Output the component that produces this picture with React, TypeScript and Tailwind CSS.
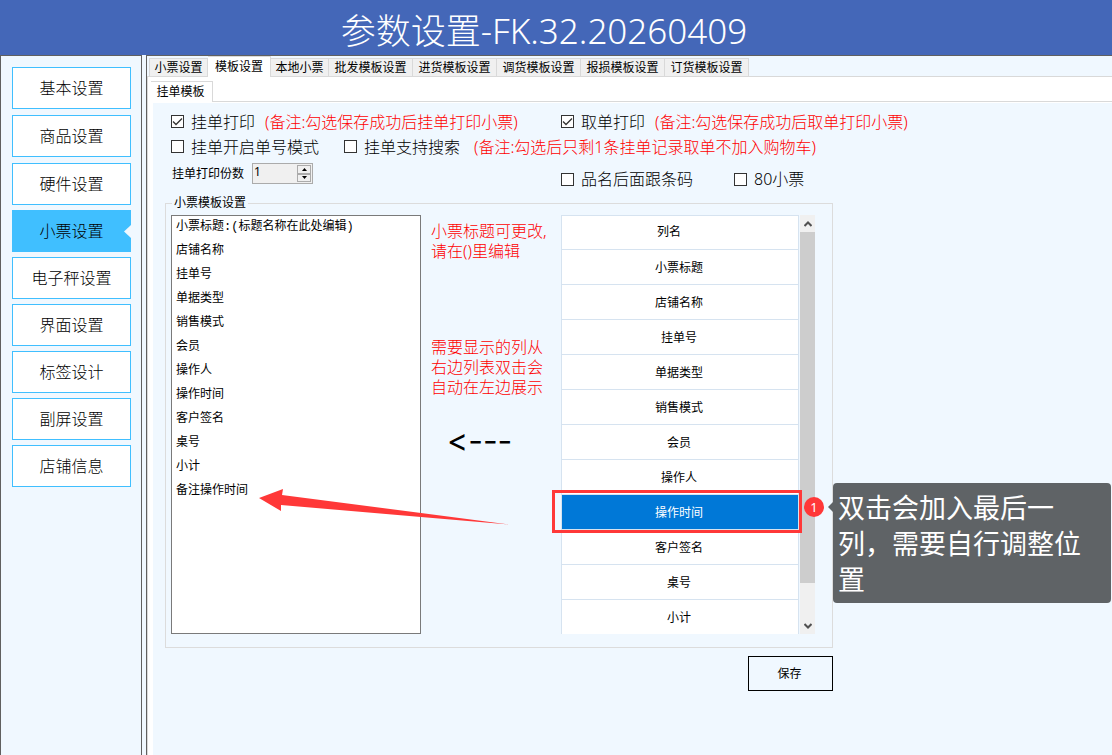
import { useState } from 'react';
import { clsx } from 'clsx';

const menuTop = ['基本设置', '商品设置', '硬件设置'];
const menuBottom = ['小票设置', '电子秤设置', '界面设置', '标签设计', '副屏设置', '店铺信息'];

const tabs = [
  { label: '小票设置', width: 'w-[59px]' },
  { label: '模板设置', width: 'w-[63px]' },
  { label: '本地小票', width: 'w-[58px]' },
  { label: '批发模板设置', width: 'w-[84px]' },
  { label: '进货模板设置', width: 'w-[84px]' },
  { label: '调货模板设置', width: 'w-[84px]' },
  { label: '报损模板设置', width: 'w-[84px]' },
  { label: '订货模板设置', width: 'w-[84px]' },
];

const templateItems = [
  '小票标题:(标题名称在此处编辑)',
  '店铺名称',
  '挂单号',
  '单据类型',
  '销售模式',
  '会员',
  '操作人',
  '操作时间',
  '客户签名',
  '桌号',
  '小计',
  '备注操作时间',
];

const columns = [
  '小票标题',
  '店铺名称',
  '挂单号',
  '单据类型',
  '销售模式',
  '会员',
  '操作人',
  '操作时间',
  '客户签名',
  '桌号',
  '小计',
];

interface MenuButtonProps {
  label: string;
  active: boolean;
  onClick: () => void;
}

function MenuButton({ label, active, onClick }: MenuButtonProps) {
  return (
    <button
      type="button"
      onClick={onClick}
      className={clsx(
        'relative h-[42px] w-full border border-[#40bfff] text-base font-light',
        active ? 'bg-[#40bfff]' : 'bg-white'
      )}
    >
      {label}
      {active && (
        <svg className="absolute top-[14px] -right-px h-[13px] w-[7px]" viewBox="0 0 7 13">
          <path d="M7 0v13L0 6.5z" fill="#f0f8ff" />
        </svg>
      )}
    </button>
  );
}

interface CheckProps {
  label: string;
  defaultChecked?: boolean;
}

function Check({ label, defaultChecked }: CheckProps) {
  return (
    <label className="flex items-center gap-[7px] text-base leading-6 font-light whitespace-nowrap">
      <span className="relative h-[13px] w-[13px]">
        <input
          type="checkbox"
          defaultChecked={defaultChecked}
          className="peer block h-[13px] w-[13px] appearance-none border border-[#333333] bg-white"
        />
        <svg
          className="pointer-events-none absolute inset-0 hidden h-[13px] w-[13px] peer-checked:block"
          viewBox="0 0 13 13"
        >
          <path d="M2 6.5l3 3 6-6" fill="none" stroke="#333333" strokeWidth="1.3" />
        </svg>
      </span>
      {label}
    </label>
  );
}

function Note({ children }: { children: React.ReactNode }) {
  return <span className="text-base leading-6 font-light whitespace-nowrap text-[#ff0000]">{children}</span>;
}

function CopiesField() {
  const [copies, setCopies] = useState(1);

  return (
    <div className="flex">
      <label htmlFor="copies" className="mr-2 ml-px text-xs leading-[22px]">
        挂单打印份数
      </label>
      <div className="flex h-[21px] w-[61px] border border-[#ababab] bg-[#f0f0f0]">
        <input
          id="copies"
          type="text"
          value={copies}
          onChange={(e) => setCopies(Number(e.target.value) || 0)}
          className="h-4 w-0 flex-1 bg-transparent pl-px text-xs leading-4 outline-none"
        />
        <div className="my-px mr-px flex w-[14px] flex-col">
          <button
            type="button"
            aria-label="+"
            onClick={() => setCopies(copies + 1)}
            className="flex flex-1 items-center justify-center border border-[#ababab]"
          >
            <svg className="h-[3px] w-[5px]" viewBox="0 0 5 3">
              <path d="M0 3h5L2.5 0z" />
            </svg>
          </button>
          <button
            type="button"
            aria-label="-"
            onClick={() => setCopies(Math.max(0, copies - 1))}
            className="flex flex-1 items-center justify-center border border-[#ababab]"
          >
            <svg className="h-[3px] w-[5px]" viewBox="0 0 5 3">
              <path d="M0 0h5L2.5 3z" />
            </svg>
          </button>
        </div>
      </div>
    </div>
  );
}

function ColumnTable() {
  const [selected, setSelected] = useState('操作时间');

  return (
    <table className="w-[238px] border-separate border-spacing-0 border-x border-t border-[#d6e3f0] bg-white text-center text-xs">
      <thead>
        <tr>
          <th className="h-[34px] border-b border-[#d6e3f0] p-0 pr-[22px] pb-0.5 font-normal">列名</th>
        </tr>
      </thead>
      <tbody>
        {columns.map((name, i) => (
          <tr key={name} onClick={() => setSelected(name)}>
            <td
              className={clsx(
                'relative border-[#d6e3f0] p-0 pt-0.5 pr-0.5',
                i === columns.length - 1 ? 'h-[34px]' : 'h-[35px] border-b',
                name === selected && 'bg-[#0078d7] bg-clip-padding text-white'
              )}
            >
              {name}
              {name === '操作时间' && <Callout />}
            </td>
          </tr>
        ))}
      </tbody>
    </table>
  );
}

// Numbered remark hanging off the highlighted row
function Callout() {
  return (
    <>
      <div className="pointer-events-none absolute -top-[5px] -right-[4px] -bottom-1 -left-[10px] z-10 border-3 border-[#ff3838]" />
      <div className="absolute top-[2px] left-[242px] z-10 h-5 w-5 rounded-full bg-[#ff3838] text-[13px] leading-5 text-white">
        1
      </div>
      <div className="absolute -top-3 left-[271px] z-10 w-[278px] rounded bg-[#5f6366] px-[5px] pt-[7px] pb-[5px] text-left text-[27px] leading-9 text-white">
        双击会加入最后一列，需要自行调整位置
        <svg className="absolute top-[19px] -left-[5px] h-[10px] w-[5px]" viewBox="0 0 5 10">
          <path d="M5 0v10L0 5z" fill="#5f6366" />
        </svg>
      </div>
    </>
  );
}

function ScrollBar() {
  return (
    <div className="ml-px flex w-[15px] flex-col bg-[#f0f0f0]">
      <button type="button" aria-label="up" className="flex h-[17px] items-center justify-center">
        <svg className="h-[6px] w-[8px]" viewBox="0 0 8 6">
          <path d="M.5 5L4 1.5 7.5 5" fill="none" stroke="#505050" strokeWidth="2" />
        </svg>
      </button>
      <div className="h-[351px] bg-[#cdcdcd]" />
      <button type="button" aria-label="down" className="mt-auto flex h-[17px] items-center justify-center">
        <svg className="h-[6px] w-[8px]" viewBox="0 0 8 6">
          <path d="M.5 1L4 4.5 7.5 1" fill="none" stroke="#505050" strokeWidth="2" />
        </svg>
      </button>
    </div>
  );
}

export default function App() {
  const [menu, setMenu] = useState('小票设置');
  const [tab, setTab] = useState('模板设置');

  return (
    <div className="flex min-h-screen flex-col overflow-hidden bg-[#f0f8ff] font-['Noto_Sans','Noto_Sans_CJK_SC',sans-serif] text-black">
      <header className="flex h-[55px] items-center justify-center bg-[#4467b8] pt-1.5 pr-6">
        <h1 className="text-[35px] leading-10 font-light text-white">参数设置-FK.32.20260409</h1>
      </header>

      <div className="flex flex-1">
        <aside className="w-[142px] shrink-0 border-x border-t border-[#606060] pt-[11px] pr-2.5 pl-[11px]">
          <nav className="flex flex-col gap-[5px]">
            <div className="flex flex-col gap-1.5">
              {menuTop.map((label) => (
                <MenuButton key={label} label={label} active={label === menu} onClick={() => setMenu(label)} />
              ))}
            </div>
            {menuBottom.map((label) => (
              <MenuButton key={label} label={label} active={label === menu} onClick={() => setMenu(label)} />
            ))}
          </nav>
        </aside>

        <main className="ml-1 flex min-w-0 flex-1 flex-col border-t border-l border-[#606060]">
          <div role="tablist" className="flex h-5 items-end pl-0.5 text-xs">
            {tabs.map(({ label, width }, i) => (
              <button
                key={label}
                type="button"
                role="tab"
                aria-selected={label === tab}
                onClick={() => setTab(label)}
                className={clsx(
                  'shrink-0 border-t border-r border-[#d9d9d9] whitespace-nowrap',
                  width,
                  i === 0 && 'border-l',
                  label === tab ? 'z-10 -mb-px h-[21px] bg-white' : 'h-[18px] bg-[#f0f0f0]'
                )}
              >
                {label}
              </button>
            ))}
          </div>

          <div className="flex flex-1 flex-col border-t border-l border-[#d9d9d9] bg-white pt-1 pl-[5px]">
            <div role="tablist" className="-ml-0.5 flex h-[21px] text-xs">
              <button
                type="button"
                role="tab"
                aria-selected="true"
                className="w-[62px] border-t border-r border-[#d9d9d9] pr-0.5 whitespace-nowrap"
              >
                挂单模板
              </button>
              <div className="flex-1 border-b border-[#d9d9d9]" />
            </div>

            <div className="mt-px flex-1 bg-[#f0f8ff] pt-1.5 pl-3">
              <div className="flex h-[25px] items-center pl-1.5">
                <div className="flex w-[390px] gap-2.5">
                  <Check label="挂单打印" defaultChecked />
                  <Note>(备注:勾选保存成功后挂单打印小票)</Note>
                </div>
                <div className="flex gap-2.5">
                  <Check label="取单打印" defaultChecked />
                  <Note>(备注:勾选保存成功后取单打印小票)</Note>
                </div>
              </div>
              <div className="flex h-[25px] items-center pl-1.5">
                <div className="w-[173px]">
                  <Check label="挂单开启单号模式" />
                </div>
                <div className="flex gap-3.5">
                  <Check label="挂单支持搜索" />
                  <Note>(备注:勾选后只剩1条挂单记录取单不加入购物车)</Note>
                </div>
              </div>
              <div className="flex h-9 items-start pt-1 pl-1.5">
                <div className="w-[390px]">
                  <CopiesField />
                </div>
                <div className="flex pt-1">
                  <div className="w-[173px]">
                    <Check label="品名后面跟条码" />
                  </div>
                  <Check label="80小票" />
                </div>
              </div>

              <div className="flex w-fit flex-col">
                <fieldset className="border border-[#dcdcdc] pr-[17px] pb-[13px] pl-[5px]">
                  <legend className="ml-px px-0.5 text-xs leading-4">小票模板设置</legend>
                  <div className="flex pt-1">
                    <div className="relative">
                      <select
                        size={12}
                        aria-label="小票模板设置"
                        className="block h-[419px] w-[250px] appearance-none overflow-hidden border border-[#7a7a7a] bg-white font-['Liberation_Mono','Noto_Sans_CJK_SC',monospace] text-xs outline-none"
                      >
                        {templateItems.map((item) => (
                          <option key={item} className="h-6 px-1 pt-0 pb-2.5 leading-[14px]">
                            {item}
                          </option>
                        ))}
                      </select>
                      <svg
                        className="pointer-events-none absolute top-[272px] left-[88px] z-10 h-[40px] w-[252px]"
                        viewBox="0 0 252 40"
                      >
                        <path d="M0 11L24 2l-1 6 139 18 88 11.5L162 30 22 18v6z" fill="#ff3838" />
                      </svg>
                    </div>

                    <div className="ml-2.5 w-[130px] pt-1.5 text-base leading-5 font-light text-[#ff0000]">
                      <p className="w-[120px]">小票标题可更改,请在()里编辑</p>
                      <p className="mt-[76px] w-[120px]">需要显示的列从右边列表双击会自动在左边展示</p>
                      <p className="mt-6 pl-4 font-[Inter,sans-serif] text-[32px] leading-10 font-normal text-black [font-variant-ligatures:none]">
                        &lt;---
                      </p>
                    </div>

                    <ColumnTable />
                    <ScrollBar />
                  </div>
                </fieldset>
                <button type="button" className="mt-2 h-[35px] w-[85px] self-end border border-black pr-0.5 text-xs">
                  保存
                </button>
              </div>
            </div>
          </div>
        </main>
      </div>
    </div>
  );
}
